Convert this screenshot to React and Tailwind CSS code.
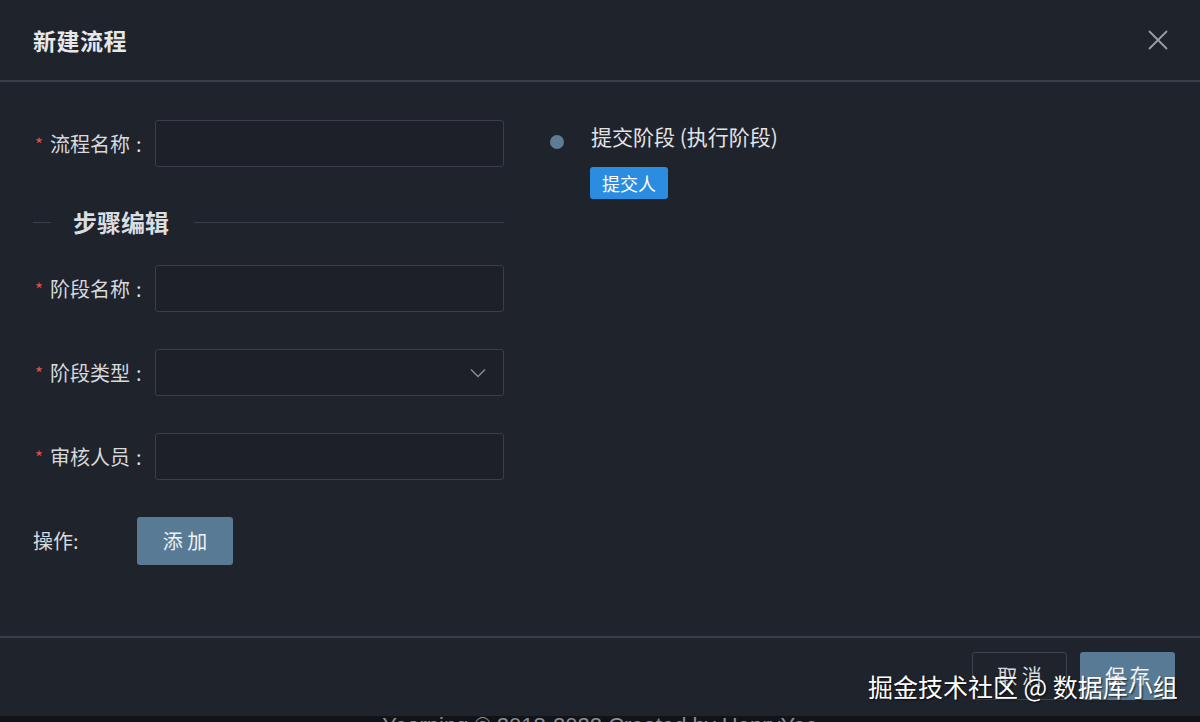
const font = { fontFamily: '"Noto Sans CJK SC", "Noto Sans", sans-serif' };

function Label({ text }) {
  return (
    <div className="w-[122px] shrink-0 flex items-center pl-[2px] text-[20px] text-[#d8d9dc]">
      <span className="text-[#e0514b] text-[17px] w-[15px]">*</span>
      <span>{text}</span>
      <span className="ml-[6px]">:</span>
    </div>
  );
}

function Field({ label, children }) {
  return (
    <div className="flex items-center h-[47px]">
      <Label text={label} />
      {children || (
        <div className="w-[349px] h-[47px] rounded-[3px] border border-[#3a3e48] bg-[#1d2029]" />
      )}
    </div>
  );
}

export default function App() {
  return (
    <div className="w-[1200px] h-[722px] overflow-hidden bg-[#1f232c] flex flex-col relative" style={font}>
      {/* header */}
      <div className="h-[82px] shrink-0 flex items-center justify-between px-[33px] border-b-2 border-[#3a3e48]">
        <h1 className="text-[23px] font-bold text-[#e6e7e9] tracking-[0.5px]">新建流程</h1>
        <svg width="20" height="20" viewBox="0 0 20 20" className="mr-[-1px]">
          <path d="M1.5 1.5 L18.5 18.5 M18.5 1.5 L1.5 18.5" stroke="#9a9da4" strokeWidth="1.8" strokeLinecap="round" />
        </svg>
      </div>

      {/* body */}
      <div className="flex-1 flex px-[33px] pt-[38px]">
        <div className="w-[471px] flex flex-col">
          <Field label="流程名称" />

          <div className="flex items-center h-[28px] mt-[41px]">
            <div className="w-[18px] h-px bg-[#3a3e48]" />
            <span className="ml-[22px] mr-[25px] text-[24px] font-bold text-[#dcdde0]">步骤编辑</span>
            <div className="flex-1 h-px bg-[#3a3e48]" />
          </div>

          <div className="mt-[29px] flex flex-col gap-[37px]">
            <Field label="阶段名称" />
            <Field label="阶段类型">
              <div className="w-[349px] h-[47px] rounded-[3px] border border-[#3a3e48] bg-[#1d2029] flex items-center justify-end pr-[17px]">
                <svg width="16" height="10" viewBox="0 0 16 10">
                  <path d="M1 1.5 L8 8.5 L15 1.5" fill="none" stroke="#8a8d94" strokeWidth="1.4" />
                </svg>
              </div>
            </Field>
            <Field label="审核人员" />
            <div className="flex items-center h-[48px]">
              <span className="w-[104px] text-[20px] text-[#d8d9dc]">操作:</span>
              <button className="w-[96px] h-[48px] rounded-[3px] bg-[#587a94] text-[20px] text-[#f0f2f4]">
                添 加
              </button>
            </div>
          </div>
        </div>

        <div className="ml-[46px] pt-[2px] flex-1">
          <div className="flex items-center h-[30px]">
            <span className="w-[14px] h-[14px] rounded-full bg-[#5e7c94] mt-[9px]" />
            <span className="ml-[27px] text-[21px] text-[#e2e3e6]">提交阶段 (执行阶段)</span>
          </div>
          <div className="ml-[40px] mt-[15px] w-[78px] h-[32px] rounded-[3px] bg-[#2a8de2] flex items-center justify-center text-[18px] text-white">
            提交人
          </div>
        </div>
      </div>

      {/* footer */}
      <div className="h-[80px] shrink-0 border-t-2 border-[#3a3e48] flex justify-end items-start pt-[14px] pr-[25px] gap-[13px]">
        <button className="w-[95px] h-[48px] rounded-[3px] border border-[#3f434d] bg-[#1f232c] text-[20px] text-[#d8d9dc]">
          取 消
        </button>
        <button className="w-[95px] h-[48px] rounded-[3px] bg-[#587a94] text-[20px] text-[#f0f2f4]">
          保 存
        </button>
      </div>

      {/* page footer behind modal */}
      <div className="h-[6px] shrink-0 bg-[#111318] overflow-hidden flex justify-center">
        <span className="text-[22px] leading-none text-[#8b8e94] -mt-[1px] whitespace-nowrap" style={{ fontFamily: '"Liberation Sans", sans-serif' }}>
          Yearning © 2018-2022 Created by HenryYee
        </span>
      </div>

      {/* watermark */}
      <div className="absolute left-[868px] top-[668px] text-[25px] text-white whitespace-nowrap [text-shadow:1px_1px_2px_rgba(0,0,0,0.8)]">
        掘金技术社区 @ 数据库小组
      </div>
    </div>
  );
}
